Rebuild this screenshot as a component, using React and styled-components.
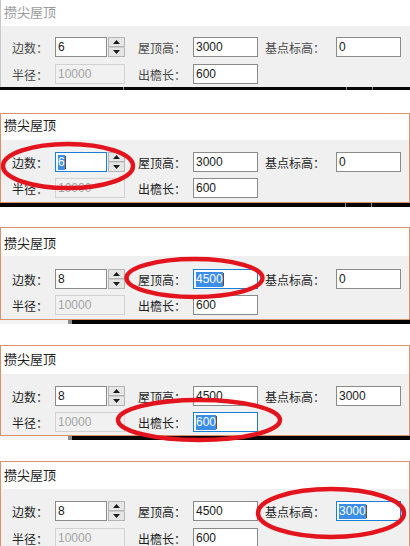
import React from "react";
import styled, { createGlobalStyle } from "styled-components";

const Global = createGlobalStyle`
  html, body { margin: 0; padding: 0; background: #ffffff; }
  * { box-sizing: border-box; }
`;

const Page = styled.div`
  width: 410px;
  display: flex;
  flex-direction: column;
  background: #ffffff;
`;

const Panel = styled.section`
  position: relative;
  margin-bottom: ${(p) => p.$gap}px;
`;

const Frame = styled.div`
  border-style: solid;
  border-color: #d9906c;
  border-width: ${(p) => (p.$first ? "0 0 0 1px" : "1px 1px 1px 1px")};
  ${(p) => (p.$first ? "border-left-color: #c9c9c9;" : "")}
  ${(p) => (p.$open ? "border-bottom-width: 0;" : "")}
`;

const Header = styled.div`
  height: ${(p) => p.$h}px;
  background: #ffffff;
  padding: ${(p) => p.$pt}px 0 0 3px;
  font-family: "Noto Sans CJK SC", "Noto Sans", sans-serif;
  font-size: 13px;
  line-height: 16px;
  color: ${(p) => (p.$faded ? "#9b9b9b" : "#1e1e1e")};
  white-space: nowrap;
`;

const Body = styled.div`
  background: #f0f0f0;
  padding: ${(p) => p.$pt}px 0 ${(p) => p.$pb}px 11px;
  display: grid;
  grid-template-columns: 43px 70px 68px 65px 78px 65px;
  grid-auto-rows: 20px;
  row-gap: ${(p) => p.$gap}px;
`;

const Label = styled.div`
  display: flex;
  align-items: center;
  padding-left: ${(p) => p.$pl || 0}px;
  font-family: "Noto Sans CJK SC", "Noto Sans", sans-serif;
  font-size: 12px;
  color: ${(p) => (p.$faded ? "#4a4a4a" : "#1f1f1f")};
  white-space: nowrap;
`;

const FieldWrap = styled.div`
  display: flex;
  gap: 1px;
`;

const Field = styled.div`
  flex: ${(p) => (p.$w ? "none" : "1")};
  width: ${(p) => (p.$w ? `${p.$w}px` : "auto")};
  height: 20px;
  display: flex;
  align-items: center;
  padding-left: 2px;
  border: 1px solid
    ${(p) => (p.$focus ? "#1a7fd9" : p.$disabled ? "#d2d2d2" : "#8a8a8a")};
  background: ${(p) => (p.$disabled ? "#f1f1f1" : "#ffffff")};
  font-family: "Liberation Sans", Arial, sans-serif;
  font-size: 12px;
  color: ${(p) => (p.$disabled ? "#a3a3a3" : "#1a1a1a")};
  white-space: nowrap;
`;

const Selected = styled.span`
  background: #3b8ee8;
  color: #ffffff;
  padding: 1px 0;
  line-height: 13px;
`;

const Caret = styled.span`
  display: inline-block;
  width: 1px;
  height: 13px;
  background: #6b4a2a;
`;

const Spinner = styled.div`
  width: 17px;
  height: 20px;
  display: flex;
  flex-direction: column;
  gap: 0;
`;

const SpinBtn = styled.div`
  flex: 1;
  display: flex;
  align-items: center;
  justify-content: center;
  background: #e6e6e6;
  border: 1px solid #b4b4b4;
  ${(p) => (p.$down ? "border-top-color: #cfcfcf;" : "")}
`;

const Bar = styled.div`
  display: flex;
  height: ${(p) => p.$h}px;
`;

const Seg = styled.div`
  flex: ${(p) => (p.$w ? "none" : "1")};
  width: ${(p) => (p.$w ? `${p.$w}px` : "auto")};
  background: ${(p) =>
    p.$kind === "tick" ? "#8c8c8c" : p.$kind === "blank" ? "#f3f3f3" : "#050505"};
`;

const Overlay = styled.svg`
  position: absolute;
  left: 0;
  top: 0;
  width: 410px;
  height: 100%;
  overflow: visible;
  pointer-events: none;
  z-index: 2;
`;

const Arrow = ({ down }) => (
  <svg width="7" height="4" viewBox="0 0 7 4">
    <path d={down ? "M0 0 L7 0 L3.5 4 Z" : "M0 4 L7 4 L3.5 0 Z"} fill="#1a1a1a" />
  </svg>
);

const Value = ({ text, sel }) =>
  sel ? (
    <>
      <Selected>{text}</Selected>
      <Caret />
    </>
  ) : (
    <span>{text}</span>
  );

const panels = [
  {
    first: true, faded: true, headerH: 26, titlePt: 4, pt: 11, gap: 7, pb: 3,
    v: { sides: "6", h: "3000", base: "0", r: "10000", eave: "600" }, focus: null,
    bar: { h: 3, segs: [{ w: 123 }, { w: 1, k: "tick" }, { w: 222 }, { w: 1, k: "tick" }, { w: 25 }, { w: 1, k: "tick" }, {}] },
    after: 23, ellipse: null,
  },
  {
    headerH: 26, titlePt: 3, pt: 12, gap: 6, pb: 4,
    v: { sides: "6", h: "3000", base: "0", r: "10000", eave: "600" }, focus: "sides",
    bar: { h: 4, segs: [{ w: 345 }, { w: 1, k: "tick" }, { w: 25 }, { w: 1, k: "tick" }, {}] },
    after: 20, ellipse: { cx: 68, cy: 53, rx: 65, ry: 22 },
  },
  {
    headerH: 28, titlePt: 7, pt: 13, gap: 6, pb: 4,
    v: { sides: "8", h: "4500", base: "0", r: "10000", eave: "600" }, focus: "h",
    bar: { h: 4, segs: [{ w: 68, k: "blank" }, { w: 4, k: "tick" }, {}] },
    after: 21, ellipse: { cx: 194.5, cy: 51, rx: 68, ry: 19 },
  },
  {
    headerH: 28, titlePt: 5, pt: 12, gap: 6, pb: 3,
    v: { sides: "8", h: "4500", base: "3000", r: "10000", eave: "600" }, focus: "eave",
    bar: { h: 4, segs: [{ w: 68, k: "blank" }, { w: 4, k: "tick" }, {}] },
    after: 21, ellipse: { cx: 199, cy: 75, rx: 81, ry: 20 },
  },
  {
    headerH: 27, titlePt: 5, pt: 12, gap: 7, pb: 2, open: true,
    v: { sides: "8", h: "4500", base: "3000", r: "10000", eave: "600" }, focus: "base",
    bar: null, after: 0, ellipse: { cx: 331, cy: 52, rx: 73, ry: 24 },
  },
];

function RoofPanel({ p }) {
  const f = p.focus;
  return (
    <Panel $gap={p.after}>
      <Frame $first={p.first} $open={p.open}>
        <Header $h={p.headerH} $pt={p.titlePt} $faded={p.faded}>攒尖屋顶</Header>
        <Body $pt={p.pt} $pb={p.pb} $gap={p.gap}>
          <Label $faded={p.faded}>边数：</Label>
          <FieldWrap>
            <Field $w={52} $focus={f === "sides"}>
              <Value text={p.v.sides} sel={f === "sides"} />
            </Field>
            <Spinner>
              <SpinBtn><Arrow /></SpinBtn>
              <SpinBtn $down><Arrow down /></SpinBtn>
            </Spinner>
          </FieldWrap>
          <Label $pl={13} $faded={p.faded}>屋顶高：</Label>
          <Field $focus={f === "h"}>
            <Value text={p.v.h} sel={f === "h"} />
          </Field>
          <Label $pl={7} $faded={p.faded}>基点标高：</Label>
          <Field $focus={f === "base"}>
            <Value text={p.v.base} sel={f === "base"} />
          </Field>

          <Label $faded={p.faded}>半径：</Label>
          <Field $disabled>
            <span>{p.v.r}</span>
          </Field>
          <Label $pl={13} $faded={p.faded}>出檐长：</Label>
          <Field $focus={f === "eave"}>
            <Value text={p.v.eave} sel={f === "eave"} />
          </Field>
        </Body>
      </Frame>
      {p.bar && (
        <Bar $h={p.bar.h}>
          {p.bar.segs.map((s, i) => (
            <Seg key={i} $w={s.w} $kind={s.k} />
          ))}
        </Bar>
      )}
      {p.ellipse && (
        <Overlay>
          <ellipse
            cx={p.ellipse.cx}
            cy={p.ellipse.cy}
            rx={p.ellipse.rx}
            ry={p.ellipse.ry}
            fill="none"
            stroke="#e3141d"
            strokeWidth="4.5"
          />
        </Overlay>
      )}
    </Panel>
  );
}

export default function App() {
  return (
    <>
      <Global />
      <Page>
        {panels.map((p, i) => (
          <RoofPanel key={i} p={p} />
        ))}
      </Page>
    </>
  );
}
